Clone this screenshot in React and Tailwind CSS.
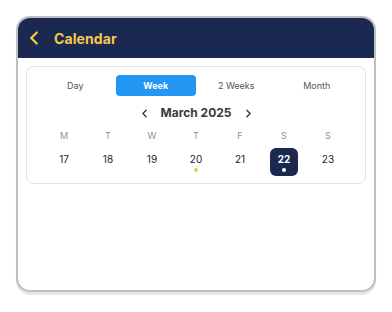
import React from 'react';
import { ChevronLeft, ChevronRight } from 'lucide-react';

const tabs = ['Day', 'Week', '2 Weeks', 'Month'];
const days = [
  { w: 'M', d: 17 },
  { w: 'T', d: 18 },
  { w: 'W', d: 19 },
  { w: 'T', d: 20, event: true },
  { w: 'F', d: 21 },
  { w: 'S', d: 22, selected: true },
  { w: 'S', d: 23 },
];

export default function App() {
  return (
    <div className="w-[392px] h-[312px] bg-white pl-4 pt-4" style={{ fontFamily: 'Inter, "Liberation Sans", sans-serif' }}>
      <div className="w-[360px] h-[276px] rounded-[14px] border-2 border-[#bfbfbf] bg-white overflow-hidden shadow-[0_3px_1px_rgba(0,0,0,0.10)]">
        {/* header */}
        <div className="h-10 bg-[#1b2951] flex items-center pl-[5px] gap-[9px]">
          <ChevronLeft className="w-[22px] h-[22px] text-[#f7c948]" strokeWidth={2.5} />
          <span className="text-[14px] font-bold text-[#f7c948] tracking-[0.1px]">Calendar</span>
        </div>

        <div className="px-2 pt-2">
          <div className="h-[118px] rounded-[8px] border border-[#e2e2e2] p-2">
            {/* tabs */}
            <div className="grid grid-cols-4 h-[21px]">
              {tabs.map(t => (
                <div
                  key={t}
                  className={
                    t === 'Week'
                      ? 'flex items-center justify-center rounded-[4px] bg-[#2196f3] text-white text-[9px] font-bold'
                      : 'flex items-center justify-center text-[9px] text-[#555]'
                  }
                >
                  {t}
                </div>
              ))}
            </div>

            {/* month nav */}
            <div className="mt-[9px] h-4 flex items-center justify-center gap-[10px] text-[#3a3a3a]">
              <ChevronLeft className="w-[13px] h-[13px]" strokeWidth={2.6} />
              <span className="text-[12px] font-bold">March 2025</span>
              <ChevronRight className="w-[13px] h-[13px]" strokeWidth={2.6} />
            </div>

            {/* week */}
            <div className="px-[7px] grid grid-cols-7 mt-[9px]">
              {days.map((x, i) => (
                <div key={i} className="flex flex-col items-center">
                  <div className="h-3 flex items-center text-[9px] text-[#8f8f8f]">{x.w}</div>
                  <div
                    className={
                      x.selected
                        ? 'mt-[6px] w-7 h-7 rounded-[6px] bg-[#1b2951] flex flex-col items-center justify-center text-white text-[10px] font-bold'
                        : 'mt-[6px] w-7 h-7 flex flex-col items-center justify-center text-[#222] text-[10px]'
                    }
                  >
                    <span className="leading-none mt-[2px]">{x.d}</span>
                    <span
                      className={
                        x.selected
                          ? 'mt-[4px] w-[4px] h-[4px] rounded-full bg-white'
                          : x.event
                          ? 'mt-[4px] w-[4px] h-[4px] rounded-full bg-[#f7c948]'
                          : 'mt-[4px] w-[4px] h-[4px]'
                      }
                    />
                  </div>
                </div>
              ))}
            </div>
          </div>
        </div>
      </div>
    </div>
  );
}
